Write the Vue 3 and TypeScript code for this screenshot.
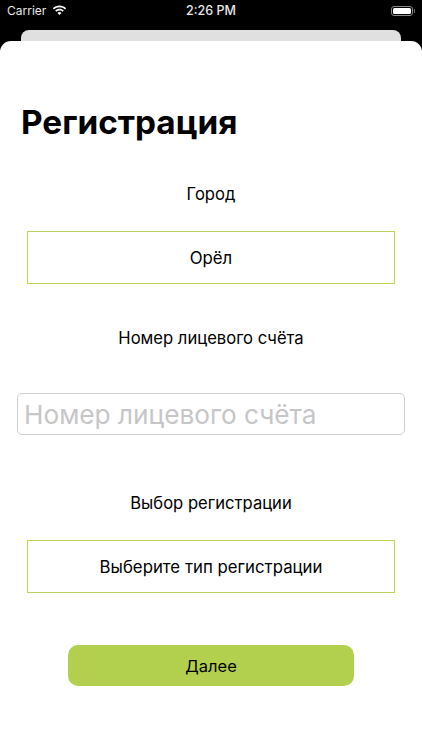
<script setup lang="ts">
const title = 'Регистрация'
</script>

<template>
  <div class="screen">
    <div class="status">
      <div class="status-left">
        <span>Carrier</span>
        <svg class="wifi" width="15" height="11" viewBox="0 0 15 11">
          <path d="M7.5 2.2c2.1 0 4 .8 5.5 2.2l1.1-1.2C12.3 1.5 10 .5 7.5.5S2.700 1.500.9 3.200L2 4.400c1.500-1.400 3.400-2.200 5.500-2.200z" fill="#fff"/>
          <path d="M7.500 5.400c1.200 0 2.300.5 3.200 1.300l1.100-1.200C10.600 4.400 9.100 3.800 7.500 3.800s-3.100.6-4.300 1.700l1.100 1.200c.9-.8 2-1.300 3.200-1.300z" fill="#fff"/>
          <path d="M7.500 7.100c-.8 0-1.500.3-2 .8l2 2.200 2-2.200c-.5-.5-1.200-.8-2-.8z" fill="#fff"/>
        </svg>
      </div>
      <span class="time">2:26 PM</span>
      <div class="battery"><div class="battery-body"><div class="battery-fill"></div></div><div class="battery-cap"></div></div>
    </div>
    <div class="back-sheet"></div>
    <main class="sheet">
      <h1>{{ title }}</h1>
      <p class="label first">Город</p>
      <div class="select">Орёл</div>
      <p class="label second">Номер лицевого счёта</p>
      <div class="input">Номер лицевого счёта</div>
      <p class="label third">Выбор регистрации</p>
      <div class="select">Выберите тип регистрации</div>
      <button class="next" type="button">Далее</button>
    </main>
  </div>
</template>

<style>
html, body { margin: 0; background: #000; }
</style>

<style scoped>
.screen {
  width: 422px;
  height: 750px;
  background: #000;
  overflow: hidden;
  font-family: Inter, "Liberation Sans", sans-serif;
  display: flex;
  flex-direction: column;
  color: #000;
}
.status {
  height: 21px;
  padding: 0 7px;
  display: grid;
  grid-template-columns: 1fr auto 1fr;
  align-items: center;
  color: #e8e8e8;
  font-size: 12px;
}
.status-left { display: flex; align-items: center; gap: 6px; }
.time { font-size: 12.5px; font-weight: 500; }
.battery { justify-self: end; display: flex; align-items: center; gap: 1px; }
.battery-body { width: 22px; height: 10px; border: 1px solid #888; border-radius: 3px; padding: 1px; box-sizing: border-box; }
.battery-fill { width: 100%; height: 100%; background: #fff; border-radius: 1.5px; }
.battery-cap { width: 1.5px; height: 4px; background: #777; border-radius: 0 1px 1px 0; }
.back-sheet {
  margin: 9px 21px 0;
  height: 11px;
  background: #e0e0e0;
  border-radius: 8px 8px 0 0;
  flex: none;
}
.sheet {
  flex: 1;
  background: #fff;
  border-radius: 11px 11px 0 0;
  display: flex;
  flex-direction: column;
  align-items: center;
}
h1 {
  align-self: flex-start;
  margin: 61px 0 0 21px;
  font-size: 33.3px;
  line-height: 41px;
  font-weight: 700;
}
.label {
  margin: 0;
  font-size: 16.6px;
  line-height: 22px;
  text-align: center;
}
.first { margin-top: 40px; }
.second { margin-top: 43px; }
.third { margin-top: 57px; }
.select {
  box-sizing: border-box;
  width: 368px;
  height: 53px;
  margin-top: 26px;
  border: 1px solid #bbd55c;
  display: flex;
  align-items: center;
  justify-content: center;
  font-size: 16.8px;
}
.input {
  box-sizing: border-box;
  width: 388px;
  height: 42px;
  margin-top: 44px;
  padding-left: 6px;
  border: 1px solid #cfcfcf;
  border-radius: 5px;
  display: flex;
  align-items: center;
  font-size: 26.2px;
  color: #c6c6c8;
}
.next {
  width: 286px;
  height: 41px;
  margin-top: 52px;
  border: none;
  border-radius: 10px;
  background: #b3cf4e;
  color: #000;
  font: 16.5px Inter, "Liberation Sans", sans-serif;
}
</style>
